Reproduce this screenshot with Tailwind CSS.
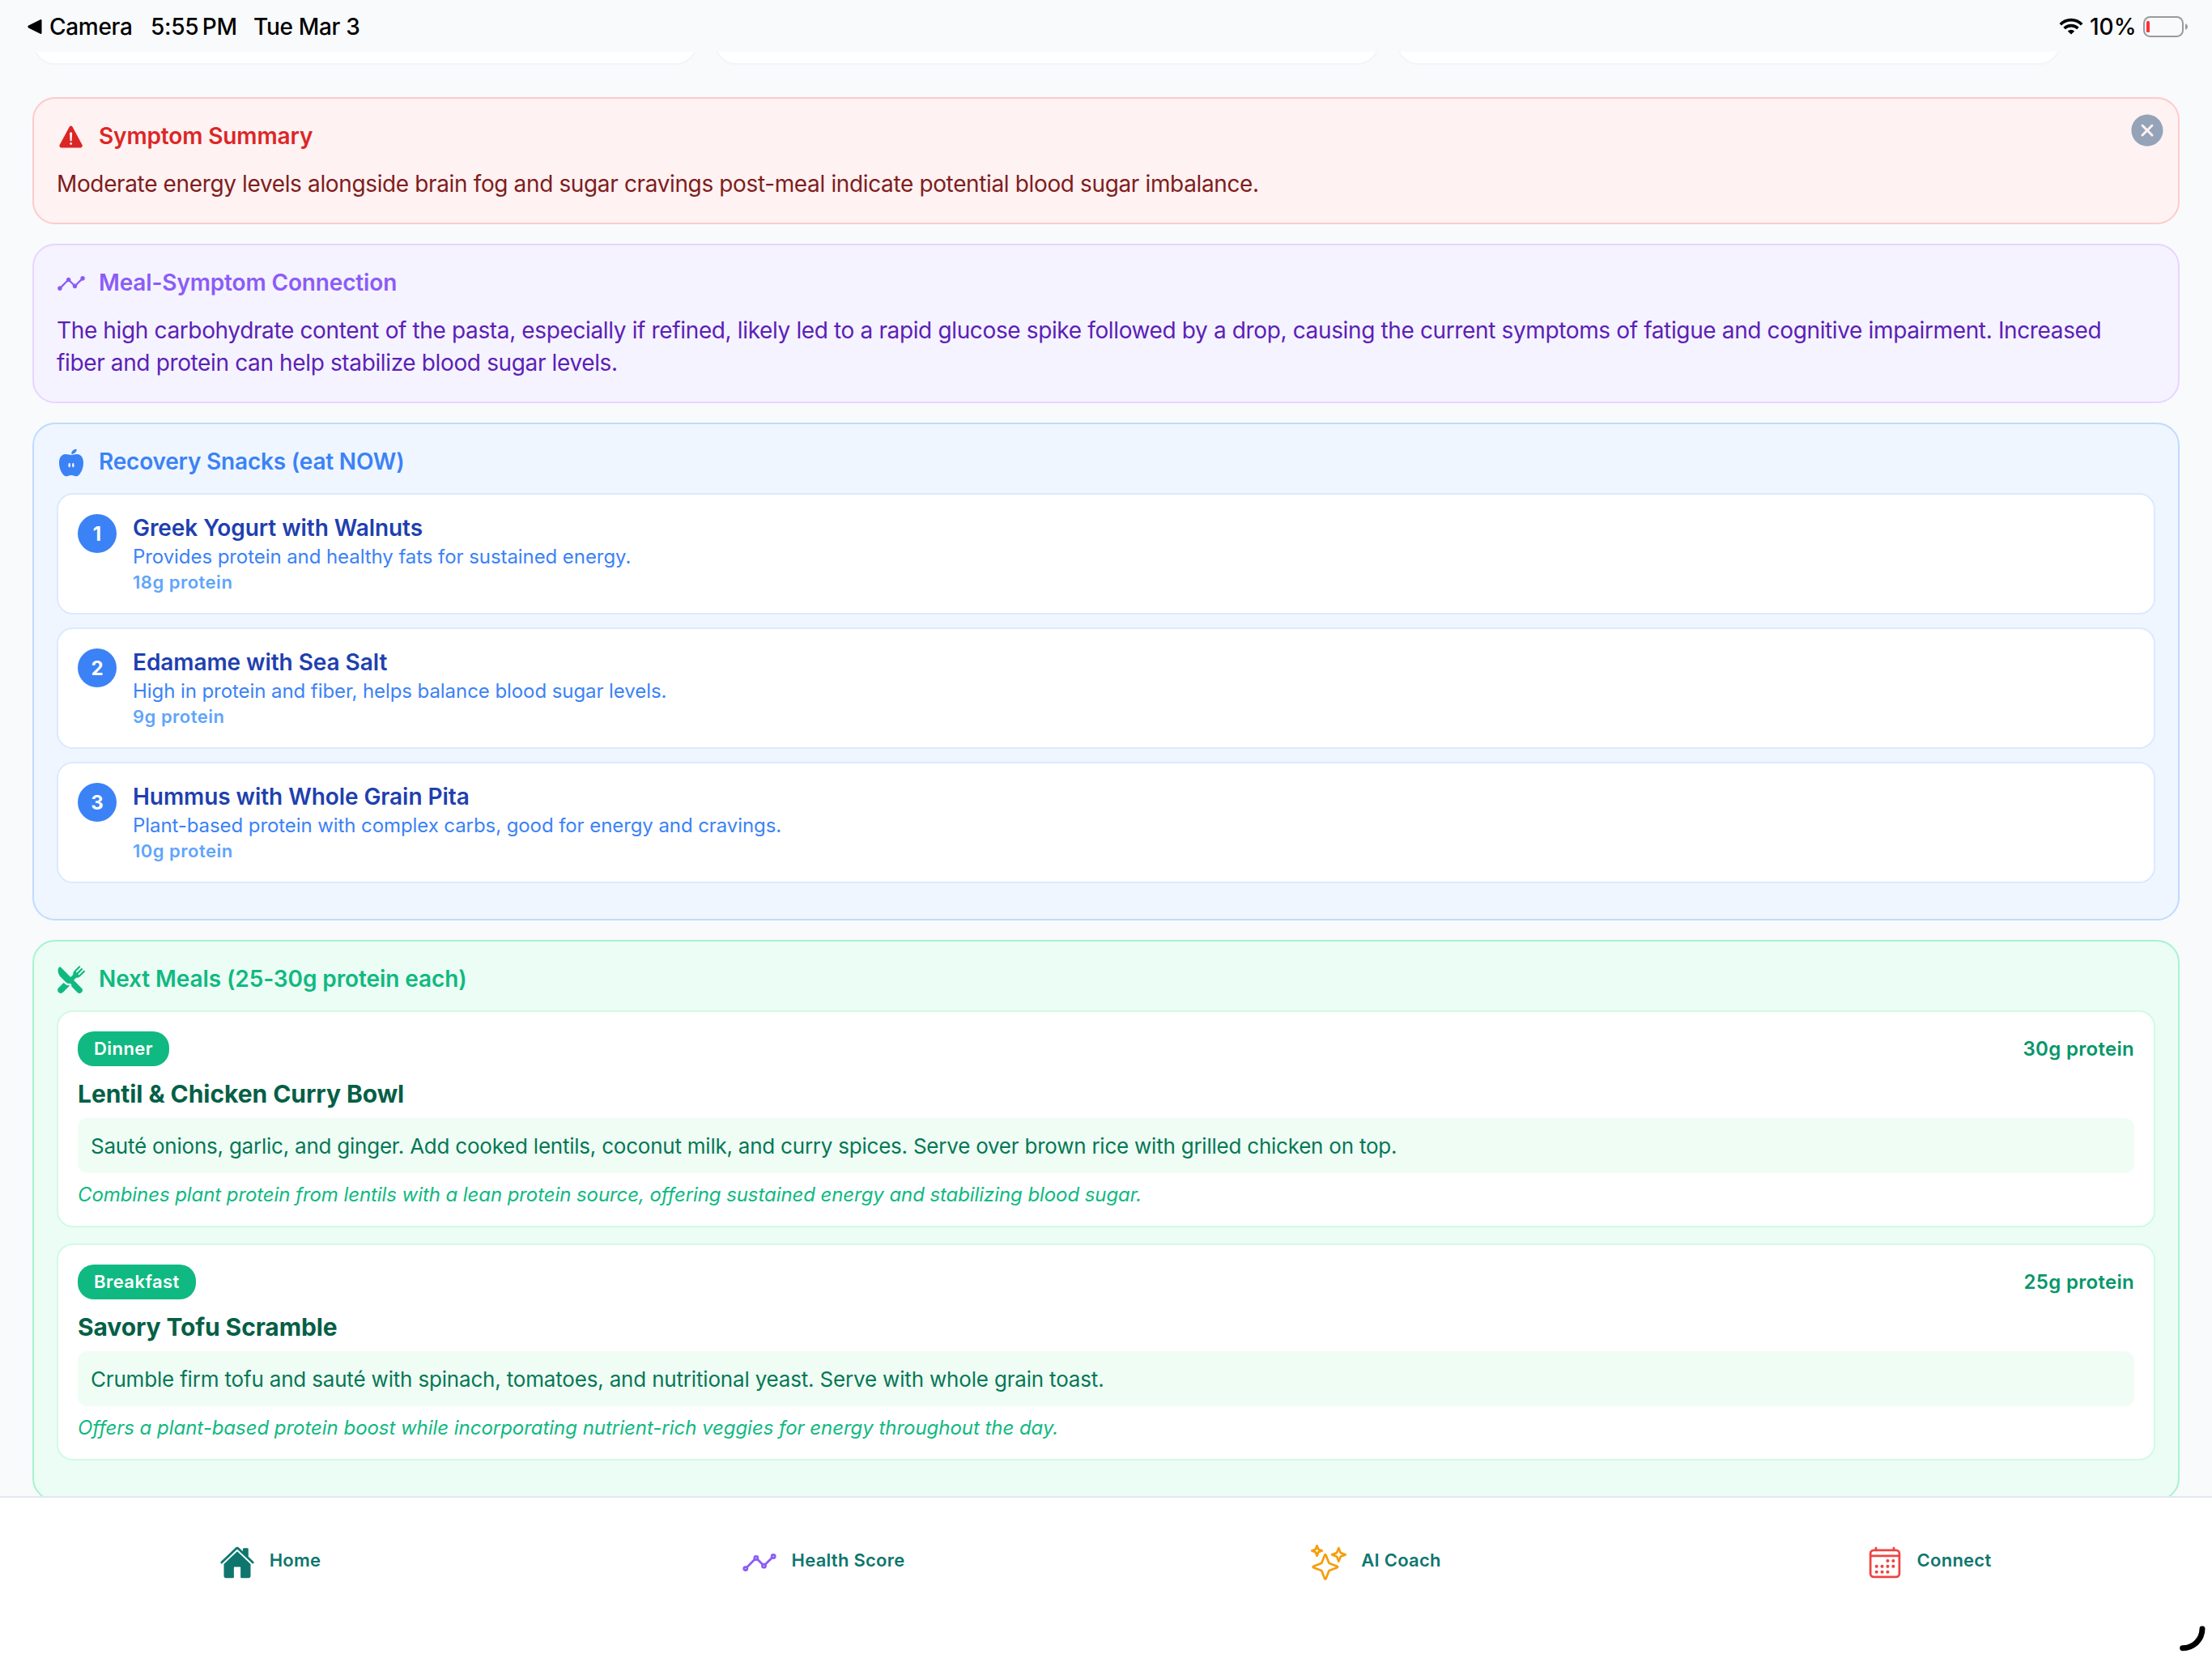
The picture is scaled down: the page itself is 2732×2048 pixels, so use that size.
<!DOCTYPE html>
<html lang="en">
<head>
  <meta charset="UTF-8">
  <meta name="viewport" content="width=device-width, initial-scale=1.0">
  <title>Meal Recovery Plan</title>
  <script src="https://cdn.jsdelivr.net/npm/@tailwindcss/browser@4"></script>
</head>
<body class="bg-[#f8fafc] font-[Inter,'Liberation_Sans',sans-serif]">
  <div class="relative flex flex-col h-screen overflow-hidden">

    <!-- Status bar -->
    <header class="flex items-center justify-between h-16 pt-px pl-[33px] pr-[30px] shrink-0 text-[28px] leading-[34px] font-medium tracking-[-0.3px] text-black whitespace-nowrap">
      <div class="flex items-center">
        <svg class="w-5 h-5 mr-2" viewBox="0 0 20 20"><path d="M2.2 8.6 16.8 1.3a1.2 1.2 0 0 1 1.7 1.1v15.2a1.2 1.2 0 0 1-1.7 1.1L2.2 11.4a1.6 1.6 0 0 1 0-2.8z"/></svg>
        <span class="w-[125px]">Camera</span>
        <span class="w-[127px]">5:55&#8201;PM</span>
        <span>Tue Mar 3</span>
      </div>
      <div class="flex items-center">
        <svg class="w-[30px] h-[22px] mr-2" viewBox="0 0 30 22" fill="none" stroke="#000" stroke-width="3.7">
          <path d="M1.8 8.2a18.6 18.6 0 0 1 26.4 0"/>
          <path d="M6.6 13a11.9 11.9 0 0 1 16.8 0"/>
          <path d="M15 20.6l-4.2-4.2a6 6 0 0 1 8.4 0z" fill="#000" stroke="none"/>
        </svg>
        <span class="w-[66px] tracking-normal">10%</span>
        <svg class="w-[55px] h-[26px]" viewBox="0 0 55 26">
          <rect x="1" y="1" width="48" height="24" rx="7.5" fill="none" stroke="#999b9d" stroke-width="2"/>
          <rect x="4" y="6" width="4" height="14" rx="1.5" fill="#ff3038"/>
          <path d="M52 9.2c1.8.6 3 2 3 3.8s-1.2 3.2-3 3.8z" fill="#999b9d"/>
        </svg>
      </div>
    </header>

    <!-- Scroll content -->
    <main class="flex-1 min-h-0 overflow-hidden px-10">
      <div class="flex gap-5 h-4 mb-10 items-end">
        <div class="w-[822px] h-20 shrink-0 bg-white border-2 border-[#f1f5f9] rounded-[28px]"></div>
        <div class="w-[822px] h-20 shrink-0 bg-white border-2 border-[#f1f5f9] rounded-[28px]"></div>
        <div class="w-[822px] h-20 shrink-0 bg-white border-2 border-[#f1f5f9] rounded-[28px]"></div>
      </div>

      <div class="flex flex-col gap-6">
        <!-- Symptom summary -->
        <section class="relative bg-[#fef2f2] border-2 border-[#fecaca] rounded-[28px] p-7">
          <div class="flex items-center gap-4 h-[37px] mb-5">
            <svg class="w-9 h-9" viewBox="0 0 512 512" fill="#dc2626"><path d="M449.07 399.08L278.64 82.58c-12.08-22.44-44.26-22.44-56.35 0L51.87 399.08A32 32 0 0080 446.25h340.89a32 32 0 0028.18-47.17zm-198.6-1.83a20 20 0 1120-20 20 20 0 01-20 20zm21.72-201.15l-5.74 122a16 16 0 01-32 0l-5.74-121.95a21.73 21.73 0 0121.5-22.69h.21a21.74 21.74 0 0121.73 22.7z"/></svg>
            <h2 class="mb-0.5 text-[28px] font-semibold tracking-[-0.13px] text-[#dc2626]">Symptom Summary</h2>
          </div>
          <p class="text-[28px] leading-10 tracking-[-0.366px] text-[#7f1d1d]">Moderate energy levels alongside brain fog and sugar cravings post-meal indicate potential blood sugar imbalance.</p>
          <button class="absolute top-[15px] right-[14px]">
            <svg class="w-12 h-12" viewBox="0 0 512 512" fill="#94a3b8"><path d="M256 48C141.31 48 48 141.31 48 256s93.31 208 208 208 208-93.31 208-208S370.69 48 256 48zm75.31 260.69a16 16 0 11-22.62 22.62L256 278.63l-52.69 52.68a16 16 0 01-22.62-22.62L233.37 256l-52.68-52.69a16 16 0 0122.62-22.62L256 233.37l52.69-52.68a16 16 0 0122.62 22.62L278.63 256z"/></svg>
          </button>
        </section>

        <!-- Meal-symptom connection -->
        <section class="bg-[#f5f3ff] border-2 border-[#e9d5ff] rounded-[28px] p-7">
          <div class="flex items-center gap-4 h-[37px] mb-5">
            <svg class="w-9 h-9" viewBox="0 0 512 512" fill="#8b5cf6"><path d="M456 128a40 40 0 00-37.23 54.6l-84.17 84.17a39.86 39.86 0 00-29.2 0l-60.17-60.17a40 40 0 10-74.46 0L70.6 306.77a40 40 0 1022.63 22.63L193.4 229.23a39.86 39.86 0 0029.2 0l60.17 60.17a40 40 0 1074.46 0l84.17-84.17A40 40 0 10456 128z"/></svg>
            <h2 class="mb-0.5 text-[28px] font-semibold tracking-[-0.15px] text-[#8b5cf6]">Meal-Symptom Connection</h2>
          </div>
          <p class="text-[28px] leading-10 tracking-[-0.366px] text-[#5b21b6]">The high carbohydrate content of the pasta, especially if refined, likely led to a rapid glucose spike followed by a drop, causing the current symptoms of fatigue and cognitive impairment. Increased fiber and protein can help stabilize blood sugar levels.</p>
        </section>

        <!-- Recovery snacks -->
        <section class="bg-[#eff6ff] border-2 border-[#bfdbfe] rounded-[28px] p-7">
          <div class="flex items-center gap-4 h-[37px] mb-5">
            <svg class="w-9 h-9" viewBox="0 0 36 36" fill="#3b82f6">
              <path d="M18 9c2.6 0 4.6-1.2 7.2-1C30.5 8.3 33 12.8 33 18.5c0 6-2.3 11.7-5.3 15-1.7 1.9-3.6 2.2-5.5 1.5-1.5-.6-2.7-1-4.2-1s-2.7.4-4.2 1c-1.9.7-3.8.4-5.500-1.500-3-3.300-5.300-9-5.300-15C3 12.800 5.500 8.300 10.800 8c2.600-.2 4.600 1 7.200 1z"/>
              <path d="M18.3 7.400c-.3-2.800 2.500-5.500 5.700-5.700.6 0 .9.300.8.900-.4 2.900-2.900 5-5.700 5.300-.5 0-.8-.1-.8-.5z"/>
              <ellipse cx="15.7" cy="21.5" rx="1.3" ry="2.7" fill="#eff6ff"/>
              <ellipse cx="20.3" cy="21.5" rx="1.3" ry="2.7" fill="#eff6ff"/>
            </svg>
            <h2 class="mb-0.5 text-[28px] font-semibold tracking-[-0.2px] text-[#3b82f6]">Recovery Snacks (eat NOW)</h2>
          </div>
          <div class="flex flex-col gap-4 pb-4">
            <div class="flex gap-5 h-[150px] p-6 bg-white border-2 border-[#dbeafe] rounded-[20px]">
              <div class="flex items-center justify-center w-12 h-12 pt-px rounded-full bg-[#3b82f6] text-white text-2xl font-bold">1</div>
              <div class="flex flex-col gap-1">
                <h3 class="text-[28px] leading-[34px] font-semibold tracking-[-0.07px] text-[#1e40af]">Greek Yogurt with Walnuts</h3>
                <p class="text-[24px] leading-[29px] tracking-[-0.07px] text-[#3b82f6]">Provides protein and healthy fats for sustained energy.</p>
                <p class="text-[22px] leading-[26px] font-semibold tracking-[0.5px] text-[#60a5fa]">18g protein</p>
              </div>
            </div>
            <div class="flex gap-5 h-[150px] p-6 bg-white border-2 border-[#dbeafe] rounded-[20px]">
              <div class="flex items-center justify-center w-12 h-12 pt-px rounded-full bg-[#3b82f6] text-white text-2xl font-bold">2</div>
              <div class="flex flex-col gap-1">
                <h3 class="text-[28px] leading-[34px] font-semibold tracking-[-0.07px] text-[#1e40af]">Edamame with Sea Salt</h3>
                <p class="text-[24px] leading-[29px] tracking-[-0.07px] text-[#3b82f6]">High in protein and fiber, helps balance blood sugar levels.</p>
                <p class="text-[22px] leading-[26px] font-semibold tracking-[0.5px] text-[#60a5fa]">9g protein</p>
              </div>
            </div>
            <div class="flex gap-5 h-[150px] p-6 bg-white border-2 border-[#dbeafe] rounded-[20px]">
              <div class="flex items-center justify-center w-12 h-12 pt-px rounded-full bg-[#3b82f6] text-white text-2xl font-bold">3</div>
              <div class="flex flex-col gap-1">
                <h3 class="text-[28px] leading-[34px] font-semibold tracking-[-0.07px] text-[#1e40af]">Hummus with Whole Grain Pita</h3>
                <p class="text-[24px] leading-[29px] tracking-[-0.08px] text-[#3b82f6]">Plant-based protein with complex carbs, good for energy and cravings.</p>
                <p class="text-[22px] leading-[26px] font-semibold tracking-[0.5px] text-[#60a5fa]">10g protein</p>
              </div>
            </div>
          </div>
        </section>

        <!-- Next meals -->
        <section class="bg-[#ecfdf5] border-2 border-[#a7f3d0] rounded-[28px] p-7">
          <div class="flex items-center gap-4 h-[37px] mb-5">
            <svg class="w-9 h-9" viewBox="0 0 512 512" fill="#10b981">
              <path d="M357.57 223.94a79.48 79.48 0 0056.58-23.44l77-76.95c6.09-6.09 6.65-16 .85-22.39a16 16 0 00-23.17-.56l-68.63 68.58a12.29 12.29 0 01-17.37 0c-4.79-4.78-4.53-12.86.25-17.64l68.33-68.33a16 16 0 00-.56-23.16A15.62 15.62 0 00440.27 56a16.71 16.71 0 00-11.81 4.9l-68.27 68.26a12.29 12.29 0 01-17.37 0c-4.78-4.78-4.53-12.86.25-17.64l68.33-68.31a16 16 0 00-.56-23.16A15.62 15.62 0 00400.26 16a16.73 16.73 0 00-11.81 4.9L311.5 97.85a79.49 79.49 0 00-23.44 56.59v8.23a16 16 0 01-4.69 11.33l-35.61 35.62a4 4 0 01-5.66 0L68.82 36.33a16 16 0 00-22.58-.06C31.09 51.28 23 72.47 23 97.54c-.1 41.4 21.66 89 56.79 124.08l85.45 85.45A64.79 64.79 0 00211 326a64 64 0 0016.21-2.08 16.24 16.24 0 014.07-.53 15.93 15.93 0 0110.83 4.25l11.39 10.52a16.12 16.12 0 014.6 11.23v5.54a47.73 47.73 0 0013.77 33.65l90.05 91.57.09.1a53.29 53.29 0 0075.36-75.37L302.39 269.9a4 4 0 010-5.66L338 228.63a16 16 0 0111.32-4.69z"/>
              <path d="M211 358a97.32 97.32 0 01-68.36-28.25l-13.86-13.86a8 8 0 00-11.3 0l-85 84.56c-15.15 15.15-20.56 37.45-13.06 59.29a30.63 30.63 0 001.49 3.6C31 484 50.58 496 72 496a55.68 55.68 0 0039.64-16.44L225 365.66a4.69 4.69 0 001.32-3.72 4.54 4.54 0 00-4.8-4.02A92.94 92.94 0 01211 358z"/>
            </svg>
            <h2 class="mb-0.5 text-[28px] font-semibold tracking-[-0.1px] text-[#10b981]">Next Meals (25-30g protein each)</h2>
          </div>
          <div class="flex flex-col gap-5 pb-5">
            <div class="p-6 bg-white border-2 border-[#d1fae5] rounded-[20px]">
              <div class="flex items-center justify-between mb-4">
                <span class="flex items-center h-[43px] px-5 rounded-[20px] bg-[#10b981] text-[22px] font-semibold tracking-[0.45px] text-white">Dinner</span>
                <span class="text-2xl font-semibold tracking-[0.3px] text-[#059669]">30g protein</span>
              </div>
              <h3 class="mb-3 text-[30px] leading-9 font-bold tracking-[-0.06px] text-[#065f46]">Lentil &amp; Chicken Curry Bowl</h3>
              <p class="mb-3 px-4 pt-[17px] pb-[15px] rounded-xl bg-[#f0fdf4] text-[26px] leading-9 tracking-[-0.23px] text-[#047857]">Sauté onions, garlic, and ginger. Add cooked lentils, coconut milk, and curry spices. Serve over brown rice with grilled chicken on top.</p>
              <p class="text-[24px] leading-[29px] tracking-[-0.08px] italic text-[#10b981]">Combines plant protein from lentils with a lean protein source, offering sustained energy and stabilizing blood sugar.</p>
            </div>
            <div class="p-6 bg-white border-2 border-[#d1fae5] rounded-[20px]">
              <div class="flex items-center justify-between mb-4">
                <span class="flex items-center h-[43px] px-5 rounded-[20px] bg-[#10b981] text-[22px] font-semibold tracking-[0.45px] text-white">Breakfast</span>
                <span class="text-2xl font-semibold tracking-[0.3px] text-[#059669]">25g protein</span>
              </div>
              <h3 class="mb-3 text-[30px] leading-9 font-bold tracking-[-0.12px] text-[#065f46]">Savory Tofu Scramble</h3>
              <p class="mb-3 px-4 pt-[17px] pb-[15px] rounded-xl bg-[#f0fdf4] text-[26px] leading-9 tracking-[-0.18px] text-[#047857]">Crumble firm tofu and sauté with spinach, tomatoes, and nutritional yeast. Serve with whole grain toast.</p>
              <p class="text-[24px] leading-[29px] tracking-[-0.04px] italic text-[#10b981]">Offers a plant-based protein boost while incorporating nutrient-rich veggies for energy throughout the day.</p>
            </div>
          </div>
        </section>
      </div>
    </main>

    <!-- Tab bar -->
    <nav class="grid grid-cols-4 h-[200px] shrink-0 pb-[38px] bg-white border-t-2 border-[#e2e8f0] text-[22px] font-semibold tracking-[0.25px] text-[#0f766e]">
      <a href="#" class="flex items-center justify-center gap-[18px] pr-4">
        <svg class="w-11 h-11" viewBox="0 0 512 512" fill="#0f766e">
          <path d="M261.56 101.28a8 8 0 00-11.06 0L66.4 277.15a8 8 0 00-2.47 5.79L63.9 448a32 32 0 0032 32H192a16 16 0 0016-16V328a8 8 0 018-8h80a8 8 0 018 8v136a16 16 0 0016 16h96.06a32 32 0 0032-32V282.94a8 8 0 00-2.47-5.79z"/>
          <path d="M490.91 244.15l-74.8-71.56V64a16 16 0 00-16-16h-48a16 16 0 00-16 16v32l-57.92-55.38C272.77 35.14 264.71 32 256 32c-8.68 0-16.72 3.14-22.14 8.63l-212.7 203.5c-6.22 6-7 15.87-1.34 22.37A16 16 0 0043 267.56L250.5 69.28a8 8 0 0111.06 0l207.52 198.28a16 16 0 0022.59-.44c6.14-6.36 5.63-16.86-.76-22.97z"/>
        </svg>
        <span class="mb-[5px]">Home</span>
      </a>
      <a href="#" class="flex items-center justify-center gap-[18px] pr-4">
        <svg class="w-11 h-11" viewBox="0 0 512 512" fill="none" stroke="#8b5cf6" stroke-width="32" stroke-linecap="round" stroke-linejoin="round">
          <path d="M344 280l88-88M232 216l64 64M80 320l104-104"/>
          <circle cx="456" cy="168" r="24"/><circle cx="320" cy="304" r="24"/><circle cx="208" cy="192" r="24"/><circle cx="56" cy="344" r="24"/>
        </svg>
        <span class="mb-[5px]">Health Score</span>
      </a>
      <a href="#" class="flex items-center justify-center gap-[18px] pr-4">
        <svg class="w-11 h-11" viewBox="0 0 512 512" fill="none" stroke="#f59e0b" stroke-width="32" stroke-linecap="round" stroke-linejoin="round">
          <path d="M259.92 262.91L216.4 149.77a9 9 0 00-16.8 0l-43.52 113.14a9 9 0 01-5.17 5.17L37.77 311.6a9 9 0 000 16.8l113.14 43.52a9 9 0 015.17 5.17l43.52 113.14a9 9 0 0016.8 0l43.52-113.14a9 9 0 015.17-5.17l113.14-43.52a9 9 0 000-16.8l-113.14-43.52a9 9 0 01-5.17-5.17zM108 68L88 16 68 68 16 88l52 20 20 52 20-52 52-20-52-20zM426.67 117.33L400 48l-26.67 69.33L304 144l69.33 26.67L400 240l26.67-69.33L496 144l-69.33-26.67z"/>
        </svg>
        <span class="mb-[5px]">AI Coach</span>
      </a>
      <a href="#" class="flex items-center justify-center gap-[18px] pr-4">
        <svg class="w-11 h-11" viewBox="0 0 512 512" fill="#ef4444">
          <g fill="none" stroke="#ef4444" stroke-width="32" stroke-linejoin="round">
            <rect x="48" y="80" width="416" height="384" rx="48"/>
            <path d="M128 48v32M384 48v32" stroke-linecap="round"/>
            <path d="M464 160H48"/>
          </g>
          <circle cx="296" cy="232" r="24"/><circle cx="376" cy="232" r="24"/>
          <circle cx="136" cy="312" r="24"/><circle cx="216" cy="312" r="24"/><circle cx="296" cy="312" r="24"/><circle cx="376" cy="312" r="24"/>
          <circle cx="136" cy="392" r="24"/><circle cx="216" cy="392" r="24"/><circle cx="296" cy="392" r="24"/>
        </svg>
        <span class="mb-[5px]">Connect</span>
      </a>
    </nav>

    <!-- Corner gesture hint -->
    <svg class="absolute right-2 bottom-2 w-8 h-8" viewBox="0 0 32 32" fill="none" stroke="#000" stroke-width="7" stroke-linecap="round"><path d="M28 4a24 24 0 0 1-24.3 23.7"/></svg>
  </div>
</body>
</html>
